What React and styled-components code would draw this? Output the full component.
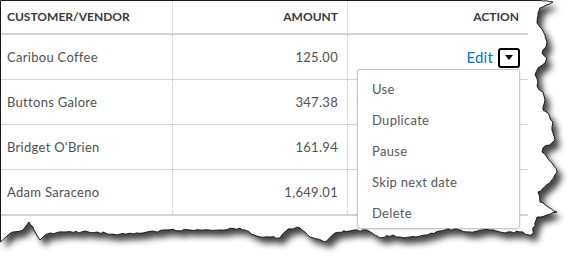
import styled, { createGlobalStyle } from "styled-components";

const GlobalStyle = createGlobalStyle`
  html, body {
    margin: 0;
    padding: 0;
    background: #fff;
  }
  body {
    font-family: Lato, "Open Sans", "Liberation Sans", sans-serif;
    color: #404143;
  }
`;

const rows = [
  { name: "Caribou Coffee", amount: "125.00", edit: true },
  { name: "Buttons Galore", amount: "347.38" },
  { name: "Bridget O'Brien", amount: "161.94" },
  { name: "Adam Saraceno", amount: "1,649.01", last: true },
];

const menuItems = ["Use", "Duplicate", "Pause", "Skip next date", "Delete"];

// torn paper outline, traced off the screenshot
const edge = [
  [0.5, 0.5], [540, 0.5], [553, 2], [540, 8], [538, 13], [537, 23], [540, 27], [545, 35],
  [547, 42], [543, 50], [542, 53], [547, 58], [545, 63], [538, 68], [535, 75], [538, 82],
  [537, 86], [543, 92], [545, 100], [543, 110], [548, 113], [553, 122], [552, 130],
  [555, 140], [552, 143], [543, 148], [542, 152], [547, 157], [552, 163], [557, 172],
  [550, 183], [538, 192], [540, 202], [557, 212], [547, 215], [537, 217], [532, 235],
  [520, 232], [505, 233], [490, 230], [470, 232], [455, 229], [440, 231], [425, 235],
  [410, 237], [400, 237], [393, 235], [380, 238], [367, 230], [350, 231], [335, 233],
  [325, 242], [310, 237], [300, 228], [288, 229], [280, 238], [260, 237], [240, 228],
  [220, 230], [200, 230], [167, 230], [143, 233], [117, 235], [97, 232], [67, 232],
  [50, 233], [43, 237], [40, 240], [33, 227], [29, 222], [23, 230], [13, 232], [7, 236],
  [0.5, 242],
];

const roughen = (pts) => {
  let seed = 7;
  const rnd = () => {
    seed = (seed * 9301 + 49297) % 233280;
    return seed / 233280 - 0.5;
  };
  const out = [];
  pts.forEach((p, i) => {
    out.push(p);
    const n = pts[i + 1];
    if (!n || i === 0 || i === pts.length - 2) return;
    const steps = Math.max(1, Math.floor(Math.hypot(n[0] - p[0], n[1] - p[1]) / 3));
    for (let s = 1; s < steps; s++) {
      const t = s / steps;
      out.push([p[0] + (n[0] - p[0]) * t + rnd() * 2, p[1] + (n[1] - p[1]) * t + rnd() * 2]);
    }
  });
  return out;
};

const paperPoints = roughen(edge)
  .map(([x, y]) => `${x.toFixed(1)},${y.toFixed(1)}`)
  .join(" ");

const Frame = styled.div`
  position: relative;
  width: 581px;
  height: 268px;
  overflow: hidden;
  background: #fff;
`;

const Table = styled.div`
  display: flex;
  flex-direction: column;
  width: 528px;
`;

const Row = styled.div`
  display: grid;
  grid-template-columns: 172px 175px 181px;
  height: ${({ $header }) => ($header ? 33 : 44)}px;
  border-bottom: ${({ $thick }) => ($thick ? 2 : 1)}px solid #d2d4d7;
`;

const Cell = styled.div`
  display: flex;
  align-items: center;
  justify-content: ${({ $align }) => ($align === "right" ? "flex-end" : "flex-start")};
  padding: 0 ${({ $align }) => ($align === "right" ? "9px" : "7px")};
  border-left: ${({ $first, $dotted }) =>
    $first ? "none" : $dotted ? "1px dotted #c9c9c9" : "1px solid #e2e3e5"};
  font-size: 13px;
  letter-spacing: 0.3px;
  color: #505155;
  position: relative;
`;

const HeadCell = styled(Cell)`
  font-size: 12px;
  font-weight: 700;
  color: #393a3d;
  letter-spacing: 0;
`;

const EditLink = styled.span`
  color: #0077c5;
  font-size: 15px;
  letter-spacing: 0.2px;
  margin-right: 5px;
`;

const DropButton = styled.span`
  display: flex;
  align-items: center;
  justify-content: center;
  width: 18px;
  height: 16px;
  border: 2px solid #000;
  border-radius: 3px;
  margin-right: -1px;
  margin-top: 1px;

  &::after {
    content: "";
    border-left: 4.5px solid transparent;
    border-right: 4.5px solid transparent;
    border-top: 5px solid #000;
  }
`;

const Menu = styled.div`
  position: absolute;
  left: 9px;
  top: 34px;
  width: 161px;
  height: 155px;
  padding: 3px 0 0;
  background: #fff;
  border: 1px solid #c6c7ca;
  border-radius: 3px;
  box-shadow: 0 1px 3px rgba(0, 0, 0, 0.12);
  z-index: 5;
`;

const MenuItem = styled.div`
  height: 31px;
  display: flex;
  align-items: center;
  padding-left: 14px;
  font-size: 13px;
  letter-spacing: 0.3px;
  color: #58595d;
`;

const Tear = styled.svg`
  position: absolute;
  inset: 0;
  pointer-events: none;
  z-index: 10;
`;

function TornEdge() {
  const outside = `M0,0 H581 V268 H0 Z M${paperPoints.split(" ").join(" L")} Z`;
  return (
    <Tear width="581" height="268" viewBox="0 0 581 268">
      <defs>
        <clipPath id="outside">
          <path d={outside} clipRule="evenodd" />
        </clipPath>
        <filter id="blur" x="-10%" y="-10%" width="120%" height="130%">
          <feGaussianBlur stdDeviation="3" />
        </filter>
      </defs>
      <path d={outside} fill="#fff" fillRule="evenodd" />
      <g clipPath="url(#outside)">
        <polygon points={paperPoints} transform="translate(5 6)" fill="#2e2e2e" opacity="0.9" filter="url(#blur)" />
      </g>
      <polygon points={paperPoints} fill="none" stroke="#1a1a1a" strokeWidth="1" />
    </Tear>
  );
}

export default function App() {
  return (
    <>
      <GlobalStyle />
      <Frame>
        <Table>
          <Row $header $thick>
            <HeadCell $first>CUSTOMER/VENDOR</HeadCell>
            <HeadCell $align="right">AMOUNT</HeadCell>
            <HeadCell $align="right">ACTION</HeadCell>
          </Row>
          {rows.map((r) => (
            <Row key={r.name} $thick={r.last}>
              <Cell $first>{r.name}</Cell>
              <Cell $align="right" $dotted>
                {r.amount}
              </Cell>
              <Cell $align="right" $dotted>
                {r.edit && (
                  <>
                    <EditLink>Edit</EditLink>
                    <DropButton />
                    <Menu>
                      {menuItems.map((m) => (
                        <MenuItem key={m}>{m}</MenuItem>
                      ))}
                    </Menu>
                  </>
                )}
              </Cell>
            </Row>
          ))}
        </Table>
        <TornEdge />
      </Frame>
    </>
  );
}
